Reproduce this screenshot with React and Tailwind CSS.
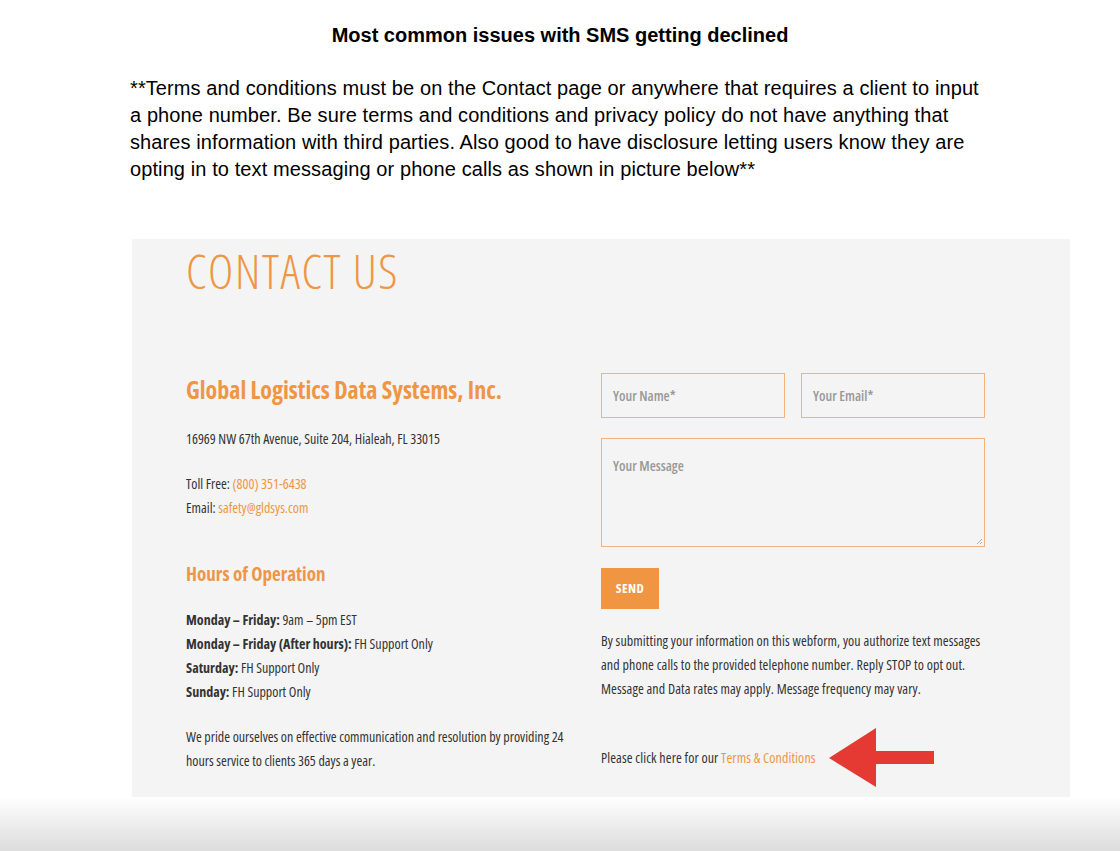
import React from "react";

const ORANGE = "text-[#ef9646]";

function Arrow() {
  return (
    <svg width="105" height="59" viewBox="0 0 105 59" className="ml-[13px] shrink-0">
      <polygon points="0,30 47,0 47,23 105,23 105,36 47,36 47,59" fill="#e53a33" />
    </svg>
  );
}

function Field({ label, className = "" }) {
  return (
    <div className={`h-[45px] border border-[#f2b47c] px-[11px] flex items-center text-[14px] font-semibold text-[#999] ${className}`}>
      {label}
    </div>
  );
}

function ContactPanel() {
  return (
    <div
      className="mx-[132px] w-[938px] h-[558px] bg-[#f4f4f4] pl-[54px] pr-[85px] text-[#333]"
      style={{ fontFamily: '"Open Sans", sans-serif' }}
    >
      <div className="font-stretch-condensed">
        <h2 className={`text-[48px] font-light leading-[64px] tracking-[1.6px] ${ORANGE}`}>CONTACT US</h2>

        <div className="flex mt-[70px]">
          {/* left column */}
          <div className="w-[415px]">
            <h3 className={`text-[24px] font-bold leading-[32px] mt-[1px] ${ORANGE}`}>Global Logistics Data Systems, Inc.</h3>
            <p className="text-[14px] leading-[24px] mt-[21px]">16969 NW 67th Avenue, Suite 204, Hialeah, FL 33015</p>
            <p className="text-[14px] leading-[24px] mt-[21px]">
              Toll Free: <span className={ORANGE}>(800) 351-6438</span>
              <br />
              Email: <span className={ORANGE}>safety@gldsys.com</span>
            </p>
            <h4 className={`text-[19px] font-bold leading-[28px] mt-[40px] ${ORANGE}`}>Hours of Operation</h4>
            <p className="text-[14px] leading-[24px] mt-[20px]">
              <b>Monday – Friday:</b> 9am – 5pm EST
              <br />
              <b>Monday – Friday (After hours):</b> FH Support Only
              <br />
              <b>Saturday:</b> FH Support Only
              <br />
              <b>Sunday:</b> FH Support Only
            </p>
            <p className="text-[14px] leading-[24px] mt-[21px] w-[392px]">
              We pride ourselves on effective communication and resolution by providing 24 hours service to clients 365 days a year.
            </p>
          </div>

          {/* right column */}
          <div className="w-[384px]">
            <div className="flex gap-[16px]">
              <Field label="Your Name*" className="w-[184px]" />
              <Field label="Your Email*" className="w-[184px]" />
            </div>
            <div className="relative mt-[20px] h-[109px] border border-[#f2b47c] px-[11px] pt-[16px] text-[14px] font-semibold text-[#999]">
              Your Message
              <svg width="7" height="7" viewBox="0 0 7 7" className="absolute right-[1px] bottom-[1px]">
                <path d="M6 1 L1 6 M6 4 L4 6" stroke="#999" strokeWidth="0.8" />
              </svg>
            </div>
            <div className="mt-[21px] w-[58px] h-[41px] bg-[#f09642] flex items-center justify-center text-white text-[13px] font-bold tracking-[0.5px]">
              SEND
            </div>
            <p className="text-[14px] leading-[24px] mt-[20px] tracking-[0.1px]">
              By submitting your information on this webform, you authorize text messages and phone calls to the provided telephone number. Reply STOP to opt out. Message and Data rates may apply. Message frequency may vary.
            </p>
            <div className="flex items-center mt-[27px] text-[14px] tracking-[0.1px]">
              <span>
                Please click here for our <span className={ORANGE}>Terms &amp; Conditions</span>
              </span>
              <Arrow />
            </div>
          </div>
        </div>
      </div>
    </div>
  );
}

export default function App() {
  return (
    <div className="w-[1120px] h-[851px] bg-white overflow-hidden flex flex-col" style={{ fontFamily: '"Liberation Sans", Arial, sans-serif' }}>
      <h1 className="text-center text-[20px] font-bold leading-[24px] mt-[23px] text-black">
        Most common issues with SMS getting declined
      </h1>
      <p className="ml-[130px] w-[856px] mt-[28px] text-[20px] leading-[27px] tracking-[0.1px] text-black">
        **Terms and conditions must be on the Contact page or anywhere that requires a client to input a phone number. Be sure terms and conditions and privacy policy do not have anything that shares information with third parties. Also good to have disclosure letting users know they are opting in to text messaging or phone calls as shown in picture below**
      </p>
      <div className="mt-[56px]">
        <ContactPanel />
      </div>
      <div className="flex-1 bg-gradient-to-b from-white to-[#dcdcdc]" />
    </div>
  );
}
